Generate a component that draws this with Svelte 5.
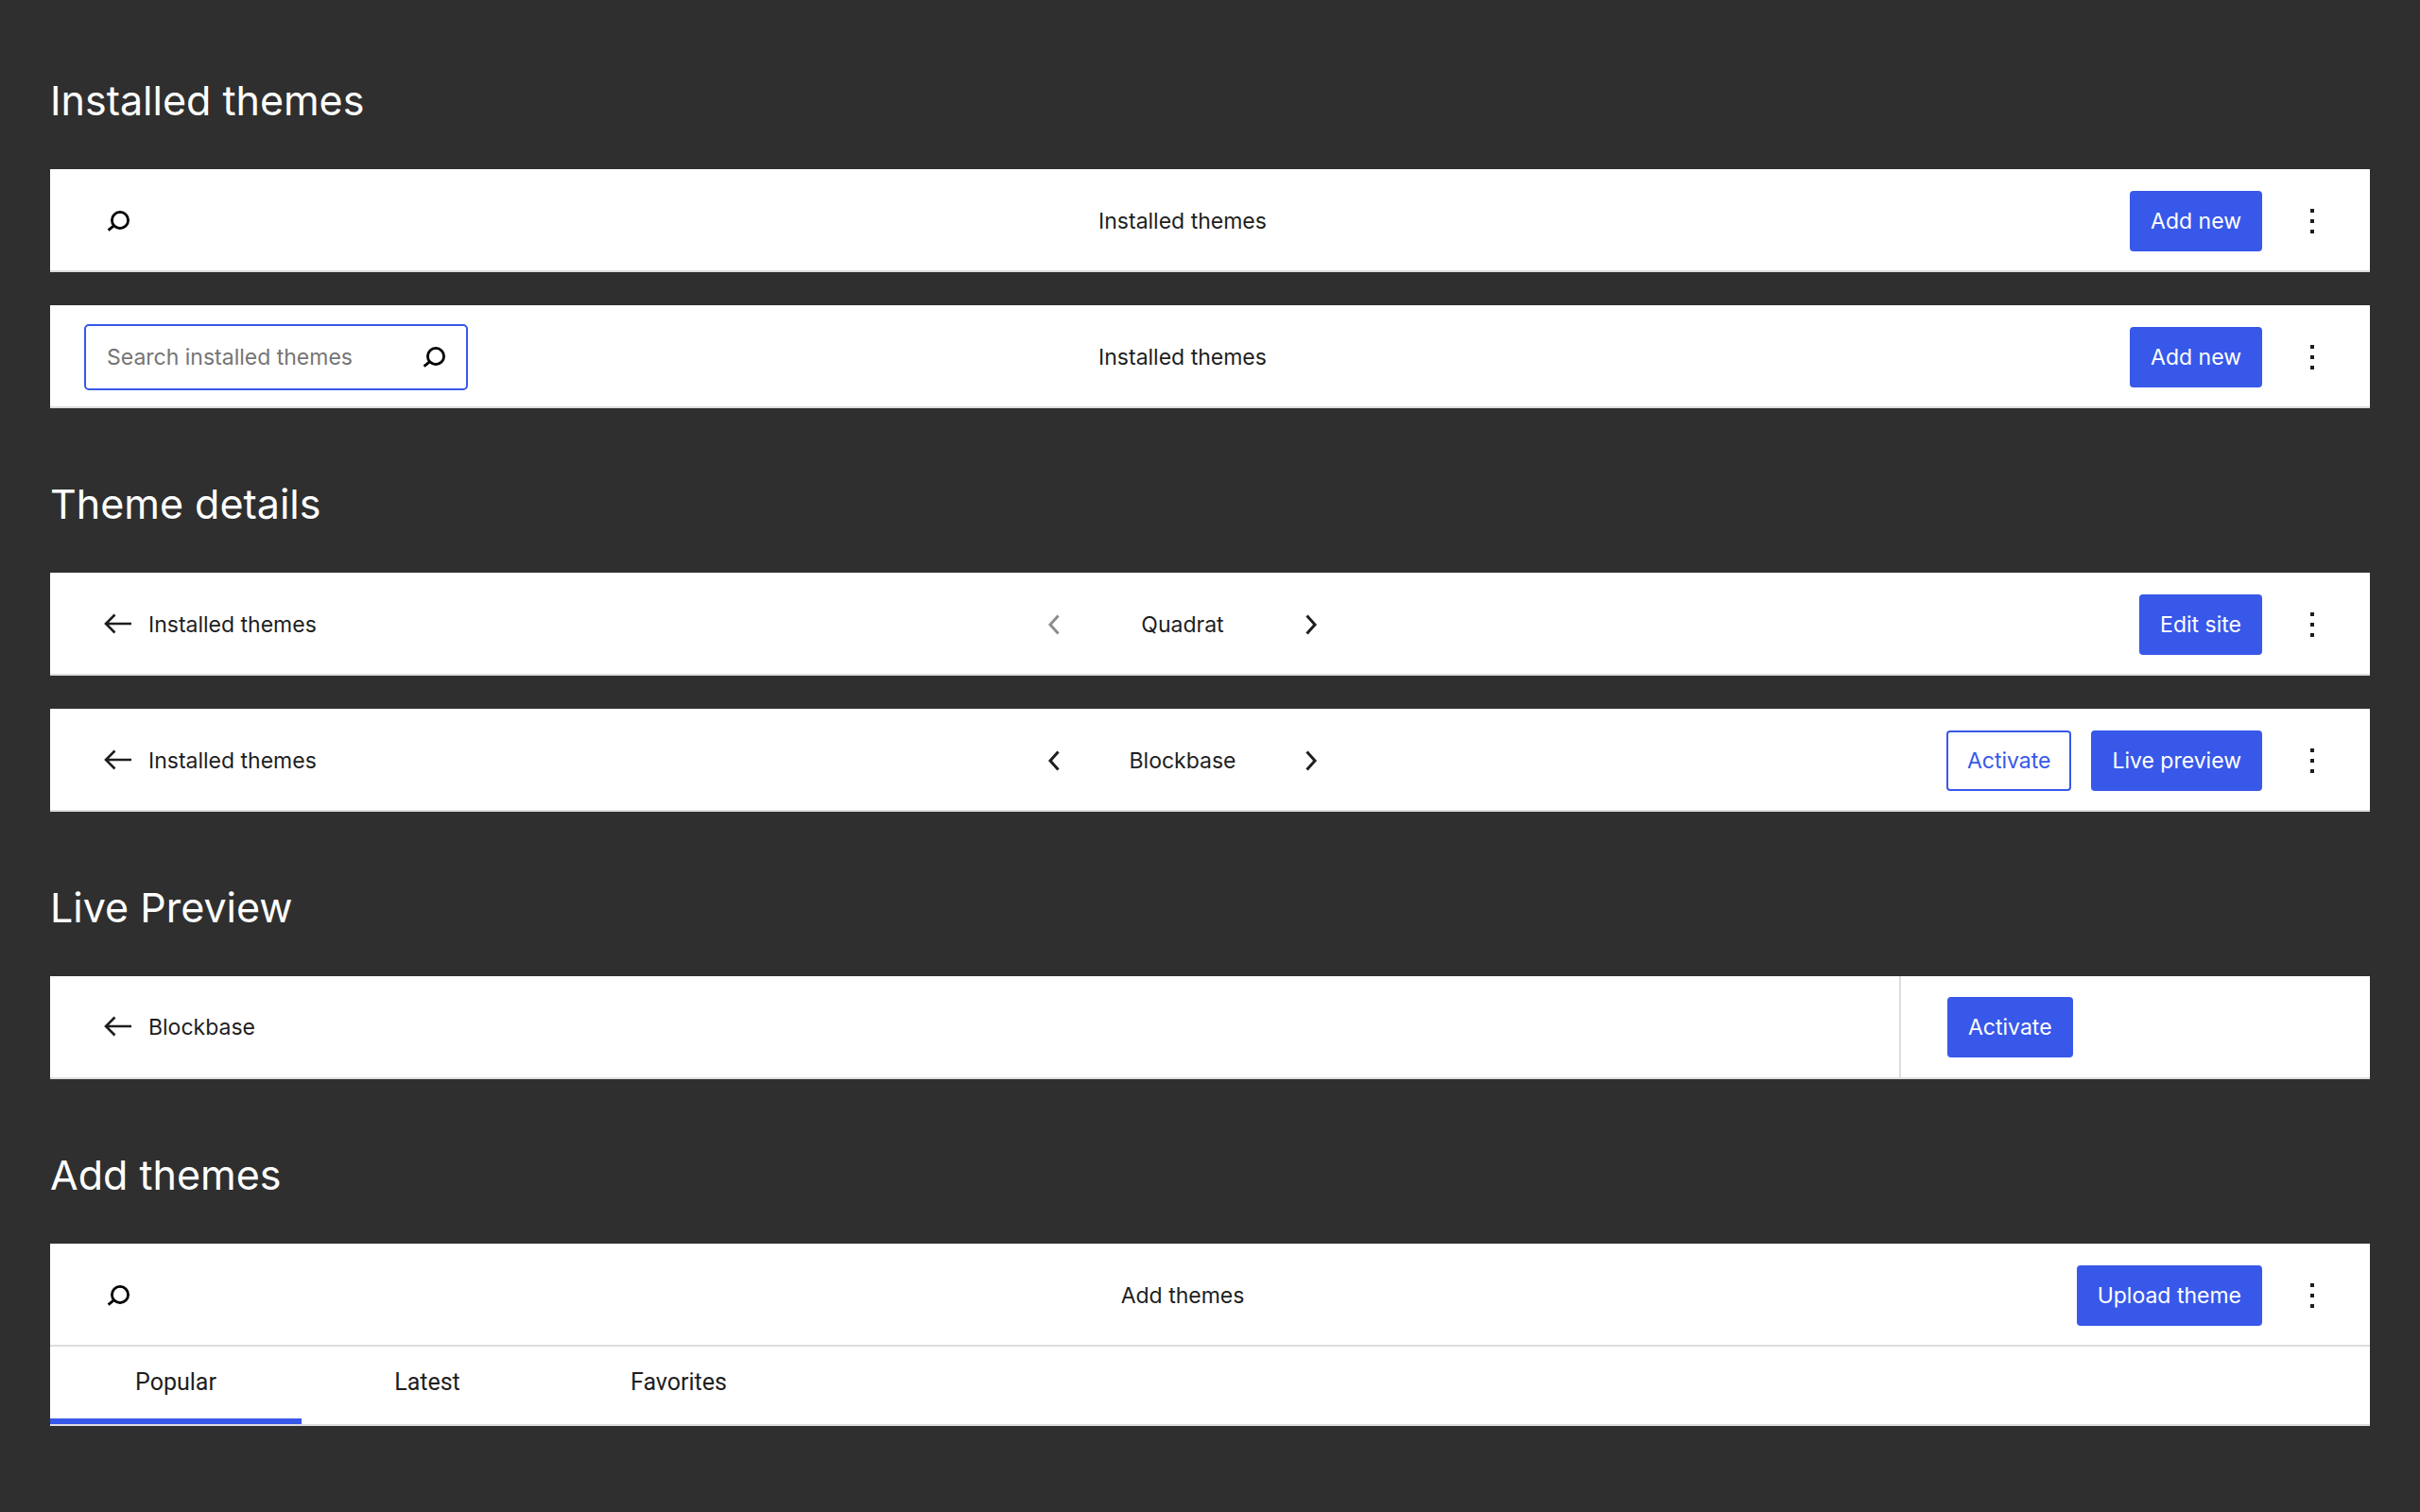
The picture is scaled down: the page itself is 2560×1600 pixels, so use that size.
<script>
  let installedQuery = $state("");
  let activeTab = $state("Popular");

  const tabs = ["Popular", "Latest", "Favorites"];
</script>

{#snippet searchIcon()}
  <svg class="icon" viewBox="0 0 36 36" aria-hidden="true">
    <circle cx="20" cy="17" r="8.6" />
    <path d="M14 22.4 7.6 27.6" />
  </svg>
{/snippet}

{#snippet chevron(direction)}
  <svg class="icon chevron" viewBox="0 0 36 36" aria-hidden="true">
    <path d={direction === "left" ? "M22.5 8.5 14 18l8.5 9.5" : "M13.5 8.5 22 18l-8.5 9.5"} />
  </svg>
{/snippet}

{#snippet searchButton()}
  <button class="search-toggle" type="button" aria-label="Search themes">
    {@render searchIcon()}
  </button>
{/snippet}

{#snippet backLink(label)}
  <a class="back" href="#themes">
    <svg class="icon arrow" viewBox="0 0 36 36" aria-hidden="true">
      <path d="M32 17H5M14.5 7.5 5 17l9.5 9.5" />
    </svg>
    <span>{label}</span>
  </a>
{/snippet}

{#snippet switcher(name, first)}
  <nav class="switcher" aria-label="Browse themes">
    <button type="button" aria-label="Previous theme" disabled={first}>
      {@render chevron("left")}
    </button>
    <span>{name}</span>
    <button type="button" aria-label="Next theme">
      {@render chevron("right")}
    </button>
  </nav>
{/snippet}

{#snippet more()}
  <button class="more" type="button" aria-label="More options">
    <svg viewBox="0 0 36 36" aria-hidden="true">
      <path d="M16 5h4v4h-4zM16 16h4v4h-4zM16 27h4v4h-4z" />
    </svg>
  </button>
{/snippet}

<main>
  <section>
    <h2>Installed themes</h2>
    <div class="bars">
      <header class="bar">
        <div class="columns">
          <div>{@render searchButton()}</div>
          <span>Installed themes</span>
          <div class="actions">
            <button class="button" type="button">Add new</button>
          </div>
        </div>
        {@render more()}
      </header>

      <header class="bar">
        <div class="columns">
          <label class="search">
            <input
              type="text"
              aria-label="Search installed themes"
              placeholder="Search installed themes"
              bind:value={installedQuery}
            />
            {@render searchIcon()}
          </label>
          <span>Installed themes</span>
          <div class="actions">
            <button class="button" type="button">Add new</button>
          </div>
        </div>
        {@render more()}
      </header>
    </div>
  </section>

  <section>
    <h2>Theme details</h2>
    <div class="bars">
      <header class="bar">
        <div class="columns">
          {@render backLink("Installed themes")}
          {@render switcher("Quadrat", true)}
          <div class="actions">
            <button class="button" type="button">Edit site</button>
          </div>
        </div>
        {@render more()}
      </header>

      <header class="bar">
        <div class="columns">
          {@render backLink("Installed themes")}
          {@render switcher("Blockbase", false)}
          <div class="actions">
            <button class="button outline" type="button">Activate</button>
            <button class="button" type="button">Live preview</button>
          </div>
        </div>
        {@render more()}
      </header>
    </div>
  </section>

  <section>
    <h2>Live Preview</h2>
    <header class="bar preview">
      {@render backLink("Blockbase")}
      <div class="sidebar">
        <button class="button" type="button">Activate</button>
      </div>
    </header>
  </section>

  <section>
    <h2>Add themes</h2>
    <header class="bar">
      <div class="columns">
        <div>{@render searchButton()}</div>
        <span>Add themes</span>
        <div class="actions">
          <button class="button" type="button">Upload theme</button>
        </div>
      </div>
      {@render more()}
    </header>
    <div class="tabs" role="tablist">
      {#each tabs as tab}
        <button
          type="button"
          role="tab"
          class:active={activeTab === tab}
          aria-selected={activeTab === tab}
          onclick={() => (activeTab = tab)}
        >
          {tab}
        </button>
      {/each}
    </div>
  </section>
</main>

<style>
  :global(body) {
    margin: 0;
    background: #2f2f2f;
  }

  main {
    --blue: #3858e9;
    --line: #dddddd;
    display: flex;
    flex-direction: column;
    gap: 77px;
    padding: 82px 53px 90px;
    color: #1e1e1e;
    font-family: Inter, "Liberation Sans", sans-serif;
    font-size: 23px;
    line-height: 32px;
  }

  h2 {
    margin: 0 0 49px;
    color: #fff;
    font-size: 43px;
    font-weight: 400;
    line-height: 48px;
  }

  button {
    padding: 0;
    border: 0;
    background: none;
    color: inherit;
    font: inherit;
    cursor: pointer;
  }

  .bars {
    display: flex;
    flex-direction: column;
    gap: 35px;
  }

  .bar {
    display: flex;
    align-items: center;
    gap: 8px;
    box-sizing: border-box;
    min-height: 109px;
    padding: 2px 36px 0;
    border-bottom: 2px solid var(--line);
    background: #fff;
  }

  .columns {
    display: grid;
    flex: 1;
    grid-template-columns: 1fr auto 1fr;
    align-items: center;
  }

  .icon {
    display: block;
    width: 36px;
    height: 36px;
    fill: none;
    stroke: #000;
    stroke-width: 2.8;
  }

  .arrow,
  .chevron {
    stroke: #1e1e1e;
    stroke-width: 2.6;
  }

  .chevron {
    stroke-width: 3;
  }

  .search-toggle {
    display: grid;
    place-items: center;
    width: 72px;
    height: 72px;
  }

  .search {
    display: flex;
    align-items: center;
    box-sizing: border-box;
    width: 406px;
    height: 70px;
    padding: 0 16px 0 22px;
    border: 2px solid var(--blue);
    border-radius: 5px;
  }

  .search input {
    flex: 1;
    min-width: 0;
    padding: 0;
    border: 0;
    outline: 0;
    background: none;
    color: inherit;
    font: inherit;
  }

  .search input::placeholder {
    color: #757575;
    opacity: 1;
  }

  .back {
    display: flex;
    align-items: center;
    justify-self: start;
    gap: 14px;
    padding-left: 18px;
    color: inherit;
    text-decoration: none;
  }

  .switcher {
    display: flex;
    align-items: center;
    justify-content: space-between;
    width: 309px;
  }

  .switcher button:disabled {
    opacity: 0.5;
    cursor: default;
  }

  .actions {
    display: flex;
    justify-content: flex-end;
    gap: 21px;
    padding-right: 20px;
  }

  .button {
    height: 64px;
    padding: 0 22px;
    border-radius: 4px;
    background: var(--blue);
    color: #fff;
  }

  .outline {
    background: #fff;
    box-shadow: inset 0 0 0 2px var(--blue);
    color: var(--blue);
  }

  .more {
    display: grid;
    place-items: center;
    width: 50px;
    height: 64px;
  }

  .more svg {
    width: 36px;
    height: 36px;
    fill: #1e1e1e;
  }

  .preview {
    align-items: stretch;
    justify-content: space-between;
    padding-top: 0;
    padding-right: 0;
  }

  .sidebar {
    display: flex;
    align-items: center;
    box-sizing: border-box;
    width: 498px;
    padding-left: 49px;
    border-left: 2px solid var(--line);
  }

  .tabs {
    display: flex;
    border-bottom: 2px solid var(--line);
    background: #fff;
  }

  .tabs button {
    width: 266px;
    height: 82px;
    border-bottom: 6px solid transparent;
    font-family: Roboto, sans-serif;
    font-size: 25px;
  }

  .tabs .active {
    border-bottom-color: var(--blue);
  }
</style>
